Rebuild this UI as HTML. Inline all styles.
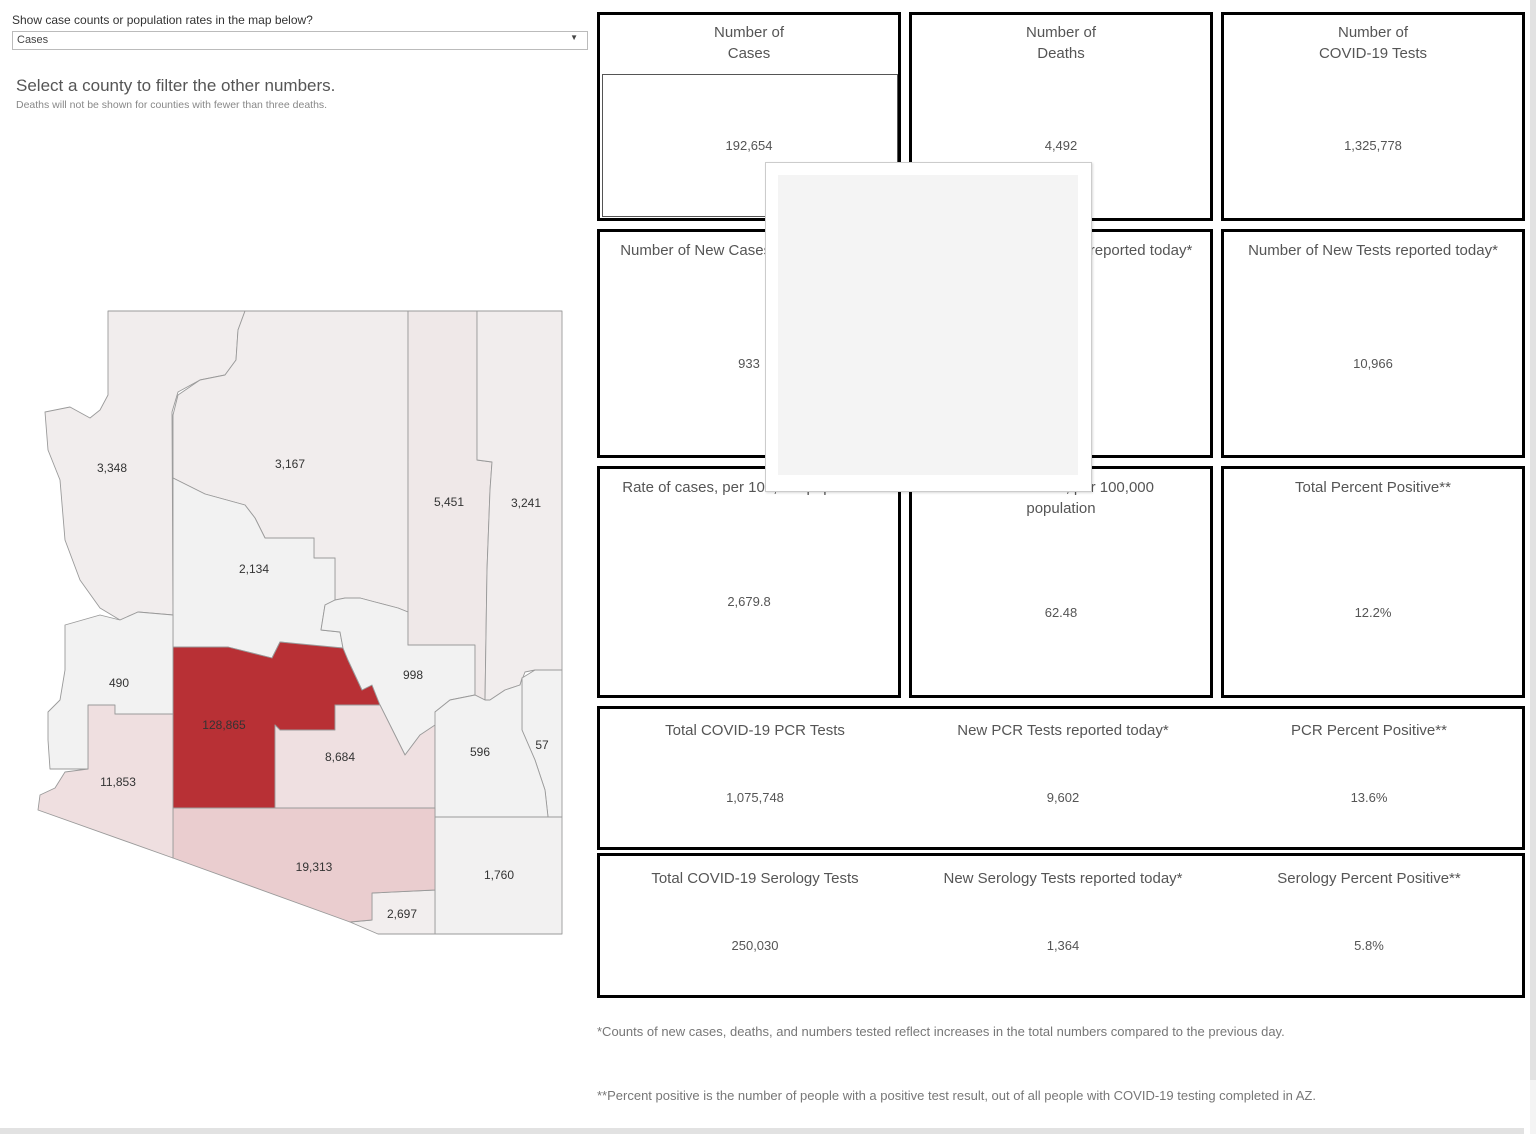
<!DOCTYPE html>
<html><head><meta charset="utf-8"><style>
*{margin:0;padding:0;box-sizing:border-box}
body{width:1536px;height:1134px;position:relative;background:#fff;font-family:"Liberation Sans",sans-serif;color:#555;overflow:hidden}
.a{position:absolute}
.box{position:absolute;border:3px solid #000;background:#fff}
.t{position:absolute;left:0;right:0;text-align:center;font-size:15px;color:#555;line-height:21px}
.v{position:absolute;left:0;right:0;text-align:center;font-size:13px;color:#555}
.c{position:absolute;text-align:center;font-size:15px;color:#555}
.cv{position:absolute;text-align:center;font-size:13px;color:#555}
</style></head><body>
<div class="a" style="left:12px;top:13px;font-size:12px;color:#333">Show case counts or population rates in the map below?</div>
<div class="a" style="left:12px;top:31px;width:576px;height:19px;border:1px solid #bbb;font-size:11px;color:#444;padding:2px 4px">Cases<span style="position:absolute;right:9px;top:1px;font-size:8px">▼</span></div>
<div class="a" style="left:16px;top:76px;font-size:17px;color:#555">Select a county to filter the other numbers.</div>
<div class="a" style="left:16px;top:99px;font-size:10.5px;color:#888">Deaths will not be shown for counties with fewer than three deaths.</div>

<svg class="a" style="left:0;top:0" width="590" height="1000" viewBox="0 0 590 1000">
<g stroke="#9a9a9a" stroke-width="0.9" stroke-linejoin="round">
<polygon fill="#f1eded" points="108,311 245,311 238,330 236,360 225,375 200,380 178,392 172,412 173,615 138,612 120,620 100,608 80,580 65,540 60,480 48,450 45,412 70,407 90,418 100,410 108,395"/>
<polygon fill="#f1eded" points="245,311 408,311 408,612 398,608 375,602 360,598 345,598 335,602 335,558 314,558 314,538 265,538 255,518 245,505 205,494 173,478 173,415 178,395 200,380 225,375 236,360 238,330"/>
<polygon fill="#f2f2f2" points="173,478 205,494 245,505 255,518 265,538 314,538 314,558 335,558 335,600 325,605 321,630 340,632 343,648 322,647 280,642 272,658 228,647 173,647"/>
<polygon fill="#b83035" points="173,647 228,647 272,658 280,642 343,648 348,660 355,675 362,690 372,685 380,705 335,705 335,730 280,730 275,725 275,808 173,808"/>
<polygon fill="#f2f2f2" points="343,648 340,632 321,630 325,605 335,600 345,598 360,598 375,602 398,608 408,612 408,645 475,645 475,695 450,700 435,712 440,725 420,735 405,755 380,705 372,685 362,690 355,675 348,660"/>
<polygon fill="#efe0e1" points="275,725 280,730 335,730 335,705 380,705 405,755 420,735 435,725 435,808 275,808"/>
<polygon fill="#efe8e8" points="408,311 477,311 477,460 492,462 490,490 487,570 485,700 475,695 475,645 408,645"/>
<polygon fill="#f1eded" points="477,311 562,311 562,670 535,670 525,672 520,685 505,690 490,700 485,700 487,570 490,490 492,462 477,460"/>
<polygon fill="#f2f2f2" points="562,670 535,670 522,678 522,730 535,760 545,790 548,817 562,817"/>
<polygon fill="#f2f2f2" points="485,700 490,700 505,690 520,685 522,678 522,730 535,760 545,790 548,817 435,817 435,712 450,700 475,695"/>
<polygon fill="#f2f1f1" points="435,817 562,817 562,934 435,934"/>
<polygon fill="#f2eeee" points="350,922 372,920 372,893 435,890 435,934 378,934"/>
<polygon fill="#eacdcf" points="173,808 435,808 435,890 372,893 372,920 350,922 173,858"/>
<polygon fill="#efdfe0" points="88,705 115,705 115,714 173,714 173,858 38,810 40,795 55,788 65,772 88,769"/>
<polygon fill="#f2f2f2" points="65,625 100,615 120,620 138,612 173,615 173,714 115,714 115,705 88,705 88,769 50,769 48,740 48,712 60,700 65,670"/>
</g>
<g font-family="Liberation Sans, sans-serif" font-size="12" fill="#333" text-anchor="middle">
<text x="112" y="472">3,348</text><text x="290" y="468">3,167</text><text x="449" y="506">5,451</text><text x="526" y="507">3,241</text>
<text x="254" y="573">2,134</text><text x="119" y="687">490</text><text x="413" y="679">998</text><text x="224" y="729">128,865</text>
<text x="340" y="761">8,684</text><text x="480" y="756">596</text><text x="542" y="749">57</text><text x="118" y="786">11,853</text>
<text x="314" y="871">19,313</text><text x="499" y="879">1,760</text><text x="402" y="918">2,697</text>
</g></svg>

<div class="box" style="left:597px;top:12px;width:304px;height:209px"><div class="t" style="top:7px">Number of<br>Cases</div><div class="a" style="left:2px;top:59px;width:296px;height:143px;border:1px solid #555"></div><div class="v" style="top:123px">192,654</div></div>
<div class="box" style="left:909px;top:12px;width:304px;height:209px"><div class="t" style="top:7px">Number of<br>Deaths</div><div class="v" style="top:123px">4,492</div></div>
<div class="box" style="left:1221px;top:12px;width:304px;height:209px"><div class="t" style="top:7px">Number of<br>COVID-19 Tests</div><div class="v" style="top:123px">1,325,778</div></div>

<div class="box" style="left:597px;top:229px;width:304px;height:229px"><div class="t" style="top:8px">Number of New Cases reported today*</div><div class="v" style="top:124px">933</div></div>
<div class="box" style="left:909px;top:229px;width:304px;height:229px"><div class="t" style="top:8px">Number of New Deaths reported today*</div></div>
<div class="box" style="left:1221px;top:229px;width:304px;height:229px"><div class="t" style="top:8px">Number of New Tests reported today*</div><div class="v" style="top:124px">10,966</div></div>

<div class="box" style="left:597px;top:466px;width:304px;height:232px"><div class="t" style="top:8px">Rate of cases, per 100,000 population</div><div class="v" style="top:125px">2,679.8</div></div>
<div class="box" style="left:909px;top:466px;width:304px;height:232px"><div class="t" style="top:8px">Rate of deaths, per 100,000<br>population</div><div class="v" style="top:136px">62.48</div></div>
<div class="box" style="left:1221px;top:466px;width:304px;height:232px"><div class="t" style="top:8px">Total Percent Positive**</div><div class="v" style="top:136px">12.2%</div></div>

<div class="box" style="left:597px;top:706px;width:928px;height:144px">
<div class="c" style="left:0;width:310px;top:13px">Total COVID-19 PCR Tests</div><div class="cv" style="left:0;width:310px;top:81px">1,075,748</div>
<div class="c" style="left:310px;width:306px;top:13px">New PCR Tests reported today*</div><div class="cv" style="left:310px;width:306px;top:81px">9,602</div>
<div class="c" style="left:616px;width:306px;top:13px">PCR Percent Positive**</div><div class="cv" style="left:616px;width:306px;top:81px">13.6%</div></div>
<div class="box" style="left:597px;top:853px;width:928px;height:145px">
<div class="c" style="left:0;width:310px;top:14px">Total COVID-19 Serology Tests</div><div class="cv" style="left:0;width:310px;top:82px">250,030</div>
<div class="c" style="left:310px;width:306px;top:14px">New Serology Tests reported today*</div><div class="cv" style="left:310px;width:306px;top:82px">1,364</div>
<div class="c" style="left:616px;width:306px;top:14px">Serology Percent Positive**</div><div class="cv" style="left:616px;width:306px;top:82px">5.8%</div></div>

<div class="a" style="left:765px;top:162px;width:327px;height:330px;background:#fff;border:1px solid #ccc;box-shadow:1px 1px 2px rgba(0,0,0,.15)"><div class="a" style="left:12px;top:12px;width:300px;height:300px;background:#f4f4f4"></div></div>

<div class="a" style="left:597px;top:1024px;font-size:13px;color:#777">*Counts of new cases, deaths, and numbers tested reflect increases in the total numbers compared to the previous day.</div>
<div class="a" style="left:597px;top:1088px;font-size:13px;color:#777">**Percent positive is the number of people with a positive test result, out of all people with COVID-19 testing completed in AZ.</div>

<div class="a" style="left:1530px;top:0;width:6px;height:1080px;background:#e2e2e2"></div>
<div class="a" style="left:1530px;top:1080px;width:6px;height:54px;background:#f4f4f4"></div>
<div class="a" style="left:0;top:1128px;width:1524px;height:6px;background:#e2e2e2"></div>
</body></html>
